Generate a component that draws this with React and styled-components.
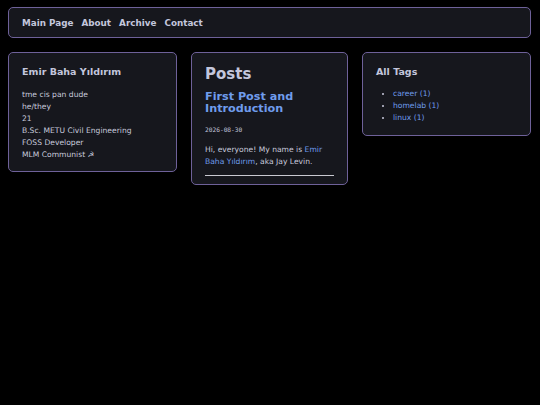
import React from 'react'
import styled, {createGlobalStyle} from 'styled-components'

const GlobalStyle = createGlobalStyle`
  html, body {
    margin: 0;
    background: #000;
  }
  body {
    font-family: "DejaVu Sans", Verdana, sans-serif;
    color: #c8cadc;
  }
`

const Page = styled.div`
  padding: 7px 8px;
  width: 523px;
`

const Nav = styled.nav`
  display: flex;
  align-items: center;
  gap: 8px;
  height: 29px;
  padding: 0 13px;
  background: #16171d;
  border: 1px solid #6e6199;
  border-radius: 5px;
`

const NavLink = styled.a`
  font-size: 8.8px;
  font-weight: bold;
  color: #c3c6dc;
  text-decoration: none;
`

const Columns = styled.div`
  display: grid;
  grid-template-columns: 169px 157px 169px;
  gap: 14px;
  align-items: start;
  margin-top: 14px;
`

const Card = styled.section`
  background: #16171d;
  border: 1px solid #6e6199;
  border-radius: 5px;
  padding: ${p => p.$pad || '13px 13px 10px'};
`

const CardTitle = styled.h3`
  margin: 0 0 ${p => p.$gap || 11}px;
  font-size: 9.5px;
  line-height: 12px;
  font-weight: bold;
  color: #c3c6dc;
`

const Line = styled.div`
  font-size: 7.6px;
  line-height: 12px;
`

const PageTitle = styled.h1`
  margin: 0;
  font-size: 15px;
  line-height: 16px;
  font-weight: bold;
  color: #c3c6dc;
`

const PostTitle = styled.h2`
  margin: 9px 0 0;
  font-size: 11.2px;
  line-height: 12px;
  font-weight: bold;
  color: #6f9cec;
`

const PostDate = styled.div`
  margin-top: 10px;
  font-family: "DejaVu Sans Mono", monospace;
  font-size: 6.2px;
  line-height: 10px;
  color: #c3c6dc;
`

const Excerpt = styled.p`
  margin: 9px 0 0;
  font-size: 7.6px;
  line-height: 12px;
`

const Link = styled.a`
  color: #6f9cec;
  text-decoration: none;
`

const Rule = styled.hr`
  margin: 7px 0 0;
  border: none;
  border-top: 1px solid #c8c8d0;
`

const TagList = styled.ul`
  margin: 0;
  padding-left: 17px;
  font-size: 7.6px;
  line-height: 12px;
`

const tags = [
  {name: 'career', count: 1},
  {name: 'homelab', count: 1},
  {name: 'linux', count: 1},
]

const about = [
  'tme cis pan dude',
  'he/they',
  '21',
  'B.Sc. METU Civil Engineering',
  'FOSS Developer',
  'MLM Communist ☭',
]

export default function App() {
  return (
    <Page>
      <GlobalStyle />
      <Nav>
        <NavLink href="#">Main Page</NavLink>
        <NavLink href="#">About</NavLink>
        <NavLink href="#">Archive</NavLink>
        <NavLink href="#">Contact</NavLink>
      </Nav>
      <Columns>
        <Card>
          <CardTitle>Emir Baha Yıldırım</CardTitle>
          {about.map(l => <Line key={l}>{l}</Line>)}
        </Card>
        <Card $pad="13px 13px 8px">
          <PageTitle>Posts</PageTitle>
          <PostTitle>First Post and Introduction</PostTitle>
          <PostDate>2026-08-30</PostDate>
          <Excerpt>
            Hi, everyone! My name is <Link href="#">Emir Baha Yıldırım</Link>, aka Jay Levin.
          </Excerpt>
          <Rule />
        </Card>
        <Card $pad="13px 13px 11px">
          <CardTitle $gap={10}>All Tags</CardTitle>
          <TagList>
            {tags.map(t => (
              <li key={t.name}><Link href="#">{t.name} ({t.count})</Link></li>
            ))}
          </TagList>
        </Card>
      </Columns>
    </Page>
  )
}
